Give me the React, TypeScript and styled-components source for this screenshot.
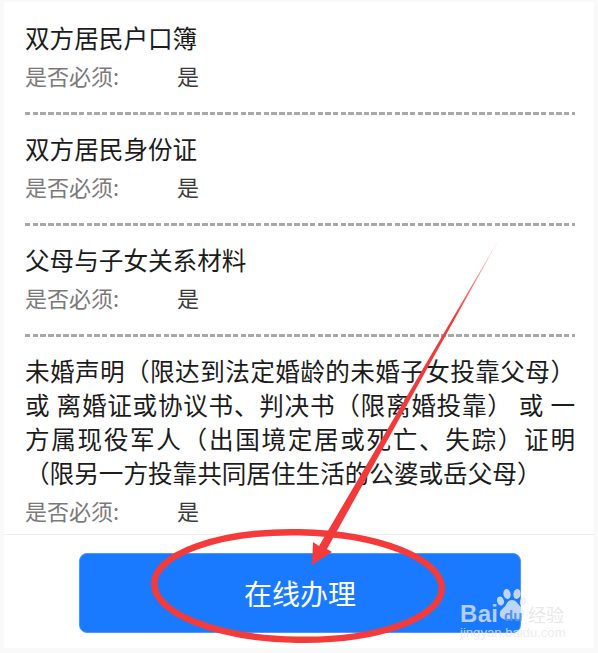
import React from "react";
import styled, { createGlobalStyle } from "styled-components";

const Global = createGlobalStyle`
  html, body { margin: 0; padding: 0; background: #f2f2f2; }
  body { font-family: "Noto Sans CJK SC", "Liberation Sans", sans-serif; }
`;

const Page = styled.div`
  position: relative;
  width: 598px;
  height: 653px;
  overflow: hidden;
  background: #f9f9f9;
`;

const Sheet = styled.main`
  margin: 2px 4px 0;
  height: 533px;
  padding: 2px 19px 0 21px;
  box-sizing: border-box;
  background: #fff;
  border-bottom: 1px solid #eeeeee;
`;

const Item = styled.section`
  padding: 16px 0 22px;
`;

const LastItem = styled.section`
  padding-top: 16px;
`;

const Divider = styled.hr`
  margin: 0;
  height: 3px;
  border: 0;
  background: repeating-linear-gradient(90deg, #a8a8a8 0 5.5px, transparent 5.5px 7.7px);
`;

const Title = styled.h2`
  margin: 0;
  font-size: 24.6px;
  line-height: 34px;
  font-weight: 400;
  color: #1c1c1c;
  text-align: justify;
`;

const Meta = styled.div`
  display: flex;
  margin-top: 6px;
  height: 30px;
  align-items: center;
  font-size: 22px;
  line-height: 30px;
`;

const MetaLabel = styled.span`
  width: 152px;
  color: #7a7a7a;
`;

const MetaValue = styled.span`
  color: #3a3a3a;
`;

const Footer = styled.footer`
  display: flex;
  justify-content: center;
  margin: 0 4px;
  height: 113px;
  padding-top: 18px;
  box-sizing: border-box;
  background: #fff;
`;

const PrimaryButton = styled.button`
  width: 442px;
  height: 80px;
  margin-left: 2px;
  padding: 0;
  border: 1px solid #4b97ff;
  border-radius: 8px;
  background: #1a7aff;
  color: #fff;
  font-family: inherit;
  font-size: 28px;
`;

const Overlay = styled.svg`
  position: absolute;
  left: 0;
  top: 0;
  pointer-events: none;
`;

const Watermark = styled.div`
  position: absolute;
  left: 460px;
  top: 600px;
  width: 130px;
  height: 42px;
  pointer-events: none;
`;

const WmBai = styled.span`
  position: absolute;
  left: 0;
  top: 0;
  font: 700 24px/28px "Liberation Sans", sans-serif;
  letter-spacing: 0.3px;
  color: rgba(232, 236, 242, 0.75);
`;

const WmJing = styled.span`
  position: absolute;
  left: 0;
  top: 24px;
  font: 400 13.1px/18px "Liberation Sans", sans-serif;
  color: rgba(232, 232, 232, 0.8);
`;

const WmCn = styled.span`
  position: absolute;
  left: 68px;
  top: 1px;
  font-size: 18px;
  line-height: 26px;
  color: rgba(228, 228, 228, 0.85);
`;

const WmPaw = styled.svg`
  position: absolute;
  left: 37px;
  top: -12px;
`;

const WmDu = styled.span`
  position: absolute;
  left: 44px;
  top: 7px;
  font: 700 15px/18px "Liberation Sans", sans-serif;
  color: #4f93f5;
`;

const items = ["双方居民户口簿", "双方居民身份证", "父母与子女关系材料"];

export default function App() {
  return (
    <Page>
      <Global />
      <Sheet>
        {items.map((t) => (
          <React.Fragment key={t}>
            <Item>
              <Title>{t}</Title>
              <Meta>
                <MetaLabel>是否必须:</MetaLabel>
                <MetaValue>是</MetaValue>
              </Meta>
            </Item>
            <Divider />
          </React.Fragment>
        ))}
        <LastItem>
          <Title>
            未婚声明（限达到法定婚龄的未婚子女投靠父母） 或 离婚证或协议书、判决书（限离婚投靠） 或 一方属现役军人（出国境定居或死亡、失踪）证明（限另一方投靠共同居住生活的公婆或岳父母）
          </Title>
          <Meta>
            <MetaLabel>是否必须:</MetaLabel>
            <MetaValue>是</MetaValue>
          </Meta>
        </LastItem>
      </Sheet>
      <Footer>
        <PrimaryButton>在线办理</PrimaryButton>
      </Footer>
      <Overlay width="598" height="653" viewBox="0 0 598 653">
        <defs>
          <linearGradient id="arrow" x1="502" y1="234" x2="313" y2="565" gradientUnits="userSpaceOnUse">
            <stop offset="0" stopColor="#f33a3a" stopOpacity="0.1" />
            <stop offset="0.25" stopColor="#f33a3a" />
            <stop offset="1" stopColor="#f33a3a" />
          </linearGradient>
        </defs>
        <ellipse cx="298" cy="586" rx="143.8" ry="53.8" fill="none" stroke="#f53a3a" strokeWidth="6.5" transform="rotate(1 298 586)" />
        <polygon points="502,234 327,549 332,552 312,565 313,542 319,546" fill="url(#arrow)" />
      </Overlay>
      <Watermark>
        <WmBai>Bai</WmBai>
        <WmPaw width="30" height="36" viewBox="0 0 30 36" fill="rgba(236,240,246,0.78)">
          <ellipse cx="10" cy="6" rx="3.6" ry="5" transform="rotate(-8 10 6)" />
          <ellipse cx="20" cy="6" rx="3.6" ry="5" transform="rotate(8 20 6)" />
          <ellipse cx="3.5" cy="13" rx="3.3" ry="4.4" transform="rotate(-20 3.5 13)" />
          <ellipse cx="26" cy="13.5" rx="3" ry="4.2" transform="rotate(15 26 13.5)" />
          <path d="M15 12c4 0 5 3 8 6 4 3 5 6 4 9-1 4-5 5-8 4.500-2-.3-3-.8-4-.8s-3 .8-6 .8c-4 0-7-3-6-7 .5-3 3-4 5-6 2-3 3-6.500 7-6.500z" />
        </WmPaw>
        <WmDu>du</WmDu>
        <WmCn>经验</WmCn>
        <WmJing>jingyan.baidu.com</WmJing>
      </Watermark>
    </Page>
  );
}
